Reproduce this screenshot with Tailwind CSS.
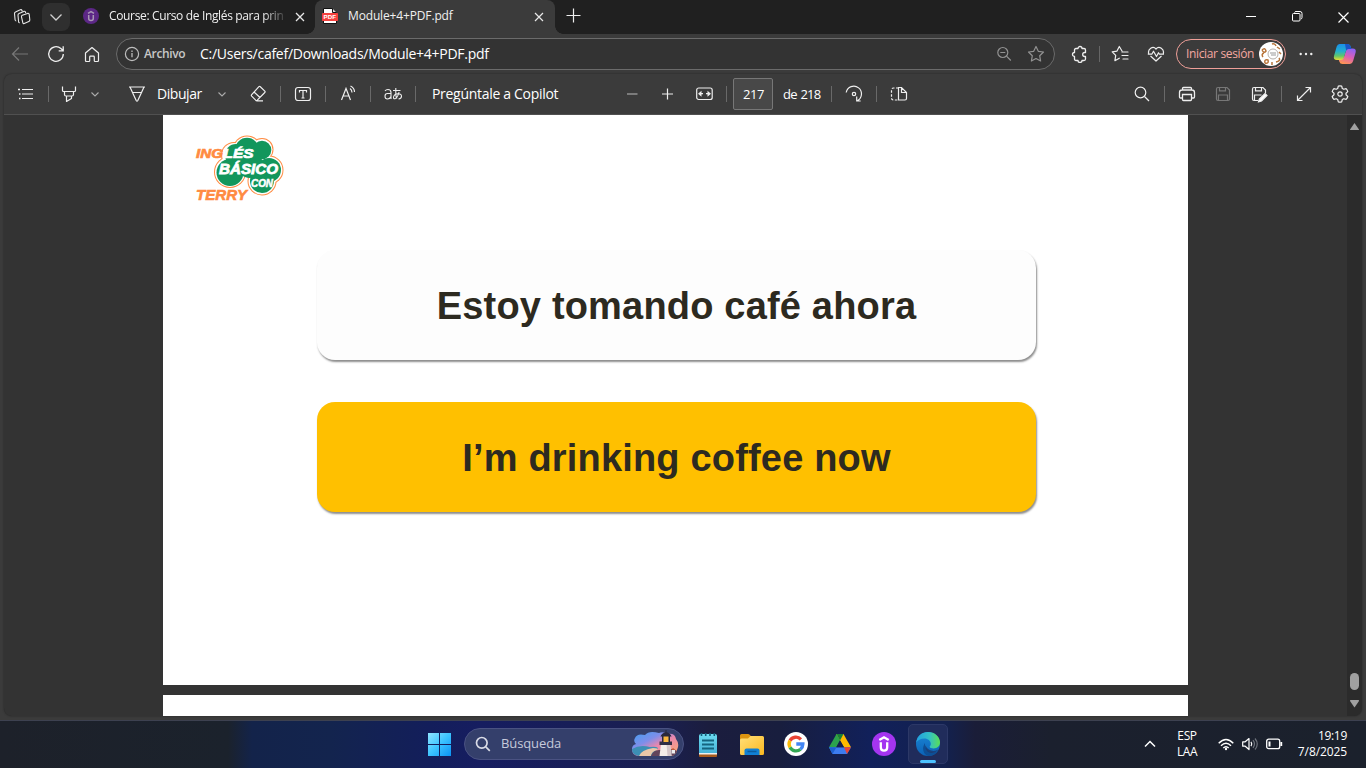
<!DOCTYPE html>
<html lang="es">
<head>
<meta charset="utf-8">
<title>Module+4+PDF.pdf</title>
<script src="https://cdn.jsdelivr.net/npm/@tailwindcss/browser@4"></script>
</head>
<body class="w-[1366px] h-[768px] overflow-hidden bg-[#3b3b3b] text-white font-['Open_Sans','Noto_Sans',sans-serif] flex flex-col [&_svg]:shrink-0 [&_svg]:block [&_span]:shrink-0 [&_span]:whitespace-nowrap">

<!-- Tab strip -->
<header class="h-[34px] shrink-0 bg-[#202020] flex items-stretch">
  <svg class="ml-3 mt-[7px]" width="20" height="20" fill="none" stroke="#e6e6e6" stroke-width="1.1" stroke-linejoin="round"><path d="M10.300 8.300l5.200-1.900q1.400-.4 1.700.9l.6 5.400q.1 1.300-1 1.800l-4.600 2q-1.200.4-1.400-.8L9.500 9.800q-.1-1.100.8-1.500z"/><path d="M7.800 15.800q-1 .1-1.200-1L6 8.200q0-1.200 1-1.600l4.800-2.200q1.300-.4 1.700.8l.2 1M4.300 14q-1 0-1.200-1L2.500 6.500q0-1.200 1-1.600l4.800-2.200q1.300-.4 1.700.8l.2.800"/></svg>
  <div class="ml-[10px] mt-[3px] w-7 h-7 rounded-lg bg-[#2f2f2f] flex items-center justify-center shrink-0"><svg width="14" height="10" fill="none" stroke="#d0d0d0" stroke-width="1.3"><path d="M1.500 2.500l5.500 5.500 5.500-5.500"/></svg></div>
  <div class="w-[245px] flex items-stretch shrink-0">
    <svg class="ml-[13px] mt-2" width="16" height="16"><circle cx="8" cy="8" r="8" fill="#5c2786"/><path d="M5 5.300L8 3.500l3 1.800M5.700 7v3.500q0 2 2.300 2t2.300-2V7" fill="none" stroke="#a897b5" stroke-width="1.500"/></svg>
    <span class="ml-[10px] w-[179px] text-xs leading-[31px] tracking-[-0.35px] text-[#f0f0f0] [mask-image:linear-gradient(90deg,#000_86%,transparent)]">Course: Curso de Inglés para prin</span>
    <svg class="ml-[7px] mt-3" width="10" height="10" stroke="#e8e8e8" stroke-width="1.300"><path d="M1 1l8 8M9 1L1 9"/></svg>
  </div>
  <div class="w-[240px] bg-[#3b3b3b] rounded-t-[8px] flex items-stretch shrink-0 relative before:absolute before:-left-2 before:bottom-0 before:size-2 before:bg-[radial-gradient(circle_at_0_0,#202020_7.500px,#3b3b3b_8px)] after:absolute after:-right-2 after:bottom-0 after:size-2 after:bg-[radial-gradient(circle_at_100%_0,#202020_7.500px,#3b3b3b_8px)]">
    <svg class="ml-[7px] mt-2" width="16" height="16"><path d="M1.500.5h9l4 4v11h-13z" fill="#fff" stroke="#111"/><path d="M10.500.5v4h4" fill="#ddd" stroke="#111"/><rect y="5" width="16" height="8" rx=".8" fill="#f4403d"/><text x="1.600" y="11.300" font-size="6.200" font-weight="700" fill="#fff" textLength="12.500" font-family="Liberation Sans">PDF</text></svg>
    <span class="ml-[10px] w-[120px] text-xs leading-[31px] tracking-[-0.15px] text-[#f0f0f0]">Module+4+PDF.pdf</span>
    <svg class="ml-[66px] mt-3" width="10" height="10" stroke="#e8e8e8" stroke-width="1.200"><path d="M1 1l8 8M9 1L1 9"/></svg>
  </div>
  <svg class="ml-[11px] mt-2" width="15" height="16" stroke="#eee" stroke-width="1.200"><path d="M.5 7.500h14M7.500.5v14"/></svg>
  <svg class="ml-[665px] mt-[11px]" width="10" height="11" stroke="#fff"><path d="M0 5.500h10"/></svg>
  <svg class="ml-[36px] mt-[11px]" width="11" height="11" fill="none" stroke="#fff"><rect x=".5" y="2.500" width="7.500" height="7.500" rx="1"/><path d="M2.500 1.500q.3-1 1.500-1h4q2 0 2 2v4q0 1.200-1 1.500"/></svg>
  <svg class="ml-[35px] mt-3" width="11" height="11" stroke="#fff" stroke-width="1.200"><path d="M.5.500l10 10M10.500.500l-10 10"/></svg>
</header>

<!-- Address row -->
<nav class="h-10 shrink-0 flex items-center">
  <svg class="ml-[11px]" width="18" height="16" fill="none" stroke="#777" stroke-width="1.200"><path d="M17 8H1.500M8 1.500L1.500 8 8 14.500"/></svg>
  <svg class="ml-[18px]" width="18" height="18" fill="none" stroke="#eee" stroke-width="1.300"><path d="M16.300 9A7.300 7.300 0 1 1 13.900 3.600L16 5.500M16.200 1.300v4.500h-4.500"/></svg>
  <svg class="ml-[19px]" width="16" height="17" fill="none" stroke="#eee" stroke-width="1.200" stroke-linejoin="round"><path d="M1.500 7L8 1.500 14.500 7v7.500q0 1-1 1H11q-.7 0-.7-.8V11q0-.8-.8-.8h-3q-.8 0-.8.8v3.700q0 .8-.7.8H2.500q-1 0-1-1z"/></svg>
  <div class="ml-4 w-[939px] h-8 rounded-full border border-[#6b6b6b] bg-[#333] flex items-center shrink-0">
    <svg class="ml-[7px]" width="16" height="16" fill="none" stroke="#bdbdbd" stroke-width="1.200"><circle cx="8" cy="8" r="6.600"/><path d="M8 7v4.200M8 4.600v1.300" stroke-width="1.300"/></svg>
    <span class="ml-1 w-[50px] text-xs font-semibold tracking-[-0.35px] text-[#c8c8c8]">Archivo</span>
    <span class="ml-[6px] w-[320px] text-sm tracking-[-0.270px]">C:/Users/cafef/Downloads/Module+4+PDF.pdf</span>
    <svg class="ml-[476px]" width="16" height="16" fill="none" stroke="#929292" stroke-width="1.200"><circle cx="6.800" cy="6.500" r="5"/><path d="M4.300 6.500h5M10.500 10.200l4.300 4.300"/></svg>
    <svg class="ml-[15px]" width="18" height="18" fill="none" stroke="#929292" stroke-width="1.200" stroke-linejoin="round"><path d="M9 1.500l2.300 4.800 5.200.7-3.800 3.700.9 5.300L9 13.500 4.400 16l.9-5.300L1.500 7l5.200-.7z"/></svg>
  </div>
  <svg class="ml-4" width="18" height="18" fill="none" stroke="#eee" stroke-width="1.300" stroke-linejoin="round"><path d="M3.500 5q0-1.500 1.500-1.500h2a2 2 0 0 1 4 0h2q1.500 0 1.500 1.500v2.500h-.8a2 2 0 0 0 0 4h.8V14q0 1.500-1.500 1.500h-2a2 2 0 0 1-4 0H5Q3.500 15.500 3.500 14v-2.500a2 2 0 0 1 0-4z"/></svg>
  <i class="ml-[10px] w-px h-4 bg-[#666]"></i>
  <svg class="ml-[11px]" width="18" height="18" fill="none" stroke="#eee" stroke-width="1.200" stroke-linejoin="round" stroke-linecap="round"><path d="M11 6L8.300 1.500 6 6.100l-4.800.7 3.500 3.500-.8 5.400 4.400-2.500M17 7h-6M17 10.500h-6M17 14h-5"/></svg>
  <svg class="ml-[18px]" width="18" height="16" fill="none" stroke="#eee" stroke-width="1.200" stroke-linejoin="round"><path d="M1.700 7.500C.5 3.500 5.800-.8 9 3c3.200-3.800 8.500.5 7.300 4.500M3.500 10L9 15l5.500-5M.8 8.200h4L6.500 5.200l3 5.300 2-3.800.9 1.500H17"/></svg>
  <div class="ml-[11px] w-[110px] h-[30px] rounded-full border border-[#ef9f98] flex items-center shrink-0">
    <span class="ml-[9px] w-[70px] text-xs tracking-[-0.35px] text-[#f4a8a1]">Iniciar sesión</span>
    <svg class="ml-[3px]" width="24" height="24"><circle cx="12" cy="12" r="12" fill="#fff"/><g fill="none" stroke="#b8753b" stroke-width="1.500"><circle cx="14" cy="12" r="5" stroke="#b5b0ac" stroke-width="1"/><path d="M3 8q3-3 4 1-2 3-4-1M4 15q-2-3 1-4M6 21q-1-4 3-3 1 4-3 3M13 23v-3M17 20q5-1 3-4M22 12l-2-2M13 2q3-1 4 2M18 5l3 2"/></g><path d="M11 11h6M12 13h5" stroke="#999"/></svg>
  </div>
  <svg class="ml-[13px]" width="14" height="4" fill="#eee"><circle cx="1.700" cy="2" r="1.200"/><circle cx="7" cy="2" r="1.200"/><circle cx="12.300" cy="2" r="1.200"/></svg>
  <svg class="ml-5" width="24" height="22"><defs><linearGradient id="ca" x1="0" y1="0" x2="0" y2="1"><stop stop-color="#1b8fe8"/><stop offset=".45" stop-color="#22b0d0"/><stop offset=".75" stop-color="#62c56a"/><stop offset="1" stop-color="#eadc35"/></linearGradient><linearGradient id="cb" x1=".7" y1="0" x2=".3" y2="1"><stop stop-color="#8f62f5"/><stop offset=".5" stop-color="#dc5fb5"/><stop offset="1" stop-color="#ff9650"/></linearGradient></defs><path d="M17 21H9.500q-2.500 0-3.200-2.600L5.500 16l3-.5q2 0 2.600-2l2-6q.6-2 2.500-2h4q4 0 3 4l-2.500 8.500Q19.300 21 17 21z" fill="url(#cb)"/><path d="M6.500 1H14q3 0 3.700 2.800L18.200 6h-2.700q-2 0-2.600 2l-2.200 7q-.7 2-2.700 2H4q-4 0-3-4L3.700 3.500Q4.500 1 6.500 1z" fill="url(#ca)"/><path d="M12 1h2.500q2.500 0 3.200 2.800L18.500 6h-3q-1.800 0-2.400 1.500z" fill="#1a55c8"/></svg>
</nav>

<!-- PDF viewer -->
<main class="mx-1 h-[642px] shrink-0 rounded-lg overflow-hidden bg-[#333] flex flex-col shadow-[0_0_2px_#222]">
  <div class="h-[41px] shrink-0 bg-[#3b3b3b] border-b border-[#505050] flex items-center text-sm tracking-[-0.3px] [&_i]:w-px [&_i]:h-4 [&_i]:bg-[#696969] [&_i]:shrink-0">
    <svg class="ml-3" width="20" height="20" fill="none" stroke="#eee" stroke-width="1.200"><path d="M6 5.500h11M6 10h11M6 14.500h11"/><path d="M2 5.500h2M3 10h1.500M3 14.500h1.500" stroke-width="1.500"/></svg>
    <i class="ml-3"></i>
    <svg class="ml-[10px]" width="20" height="20" fill="none" stroke="#eee" stroke-width="1.200" stroke-linejoin="round"><path d="M3.500 2.500v4q0 1 1 1h11q1 0 1-1v-4M5.500 7.500v3q0 1.500 1.500 1.500h6q1.500 0 1.500-1.500v-3M7.500 12v5.500l5-3V12"/></svg>
    <svg class="ml-[10px]" width="12" height="10" fill="none" stroke="#aaa" stroke-width="1.100"><path d="M2.500 3.500L6 7l3.500-3.500"/></svg>
    <svg class="ml-[26px]" width="20" height="20" fill="none" stroke="#eee" stroke-width="1.200" stroke-linejoin="round"><path d="M2 3h16M3 3l2.500 5.500h9L17 3M5.500 8.500l3.700 8q.8 1.400 1.600 0l3.700-8"/></svg>
    <span class="ml-[10px] w-[50px] tracking-[-0.45px]">Dibujar</span>
    <svg class="ml-[9px]" width="12" height="10" fill="none" stroke="#aaa" stroke-width="1.100"><path d="M2.500 3.500L6 7l3.500-3.500"/></svg>
    <svg class="ml-5" width="20" height="20" fill="none" stroke="#eee" stroke-width="1.200" stroke-linejoin="round"><path d="M12.300 2.700l4.500 4.400q.7.700 0 1.400l-7.500 7.700q-.8.700-1.600 0l-4-4q-.7-.8 0-1.600l7.200-7.900q.7-.7 1.400 0zM6 8l6 5.500M8.500 16.800H15"/></svg>
    <i class="ml-3"></i>
    <svg class="ml-3" width="20" height="20" fill="none" stroke="#eee" stroke-width="1.200"><rect x="2.500" y="3.500" width="15" height="13" rx="2.500"/><path d="M6.500 8.500V6.500h7v2M10 6.500v7.500M8.500 14h3"/></svg>
    <i class="ml-3"></i>
    <svg class="ml-[13px]" width="20" height="20" fill="none" stroke="#eee" stroke-width="1.200"><path d="M2.500 16L7 4.500 11.500 16M4 12h6M11 4.500q2 1.500 2 4M11.500 2q4 2 4 6"/></svg>
    <i class="ml-[11px]"></i>
    <svg class="ml-3" width="20" height="20" fill="none" stroke="#eee" stroke-width="1.100"><path d="M2 7q1-1.500 3-1.500 3 0 3 3V15M8 9.500H4.500q-2.500 0-2.500 2.700T4.500 15Q7 15 8 12.500M10 6.500h7.500M12.800 4v6q0 3 1.200 4.500M16 8q-1 5-3.500 6.500-2.300.7-2-1.500.7-3 4.500-3.300 3.500 0 3.500 2.500T15.500 15"/></svg>
    <i class="ml-3"></i>
    <span class="ml-4 w-[130px]">Pregúntale a Copilot</span>
    <svg class="ml-[60px]" width="20" height="20" stroke="#bbb" stroke-width="1.200"><path d="M5 10h10.500"/></svg>
    <svg class="ml-[15px]" width="20" height="20" stroke="#eee" stroke-width="1.200"><path d="M5 10h11M10.500 4.500v11"/></svg>
    <svg class="ml-[18px]" width="20" height="20" fill="none" stroke="#eee" stroke-width="1.200"><rect x="1.700" y="4" width="15.500" height="11.500" rx="2"/><path d="M3 9.700l3.500-3v6zM16 9.700l-3.500-3v6z" fill="#eee" stroke="none"/><path d="M5 9.700h3M11 9.700h3"/></svg>
    <i class="ml-[11px]"></i>
    <div class="ml-[6px] w-10 h-8 shrink-0 border border-[#777] rounded-[2px] bg-[#484848] flex items-center pl-[9px] text-[13px] tracking-[-0.4px]">217</div>
    <span class="ml-[10px] w-[38px] text-[13px] tracking-[-0.75px] [word-spacing:1px]">de 218</span>
    <i class="ml-[10px]"></i>
    <svg class="ml-3" width="20" height="20" fill="none" stroke="#eee" stroke-width="1.200"><path d="M2.500 8.500A7.700 7.700 0 1 1 13 17M13 12.500V17h4" transform="translate(-.3 0)"/><circle cx="10" cy="10" r="1.700"/></svg>
    <i class="ml-3"></i>
    <svg class="ml-3" width="20" height="20" fill="none" stroke="#eee" stroke-width="1.200"><path d="M9.500 4H4.500q-2 0-2 2v8q0 2 2 2H9" stroke-dasharray="2.500 1.500"/><path d="M9.500 3.500v12.500H16q1.500 0 1.500-1.500V8.500l-5-5zM12.500 3.500v5h5"/></svg>
    <svg class="ml-[223px]" width="20" height="20" fill="none" stroke="#eee" stroke-width="1.200"><circle cx="8.500" cy="8.500" r="5.300"/><path d="M12.500 12.500l4.500 4.500"/></svg>
    <i class="ml-3"></i>
    <svg class="ml-3" width="20" height="20" fill="none" stroke="#eee" stroke-width="1.300"><path d="M5.500 6V4.500q0-1 1-1h7q1 0 1 1V6M5 14H3.500q-1 0-1-1V8.500Q2.500 6 5 6h10q2.500 0 2.500 2.500V13q0 1-1 1H15M5.500 10.500h9v5q0 1-1 1h-7q-1 0-1-1z"/></svg>
    <svg class="ml-4" width="20" height="20" fill="none" stroke="#777" stroke-width="1.200"><path d="M3.500 5q0-1.500 1.500-1.500h9L16.500 6v9q0 1.500-1.500 1.500H5q-1.500 0-1.500-1.500zM6.500 3.500v3.300h6V3.500M5.500 16.500V11h9v5.500"/></svg>
    <svg class="ml-4" width="20" height="20" fill="none" stroke="#eee" stroke-width="1.200"><path d="M9 16.500H5q-1.500 0-1.500-1.500V5q0-1.500 1.500-1.500h9L16.500 6v3M6.500 3.500v3.300h6V3.500M5.500 16.500V11h7"/><path d="M16 9.500l2 2-5.500 5.500-3 .9.800-2.900z" fill="#fff"/></svg>
    <i class="ml-3"></i>
    <svg class="ml-3" width="20" height="20" fill="none" stroke="#eee" stroke-width="1.200"><path d="M3.500 16.500l13-13M11.500 3.500h5v5M3.500 11.500v5h5"/></svg>
    <svg class="ml-4 -mt-px" width="20" height="20" fill="none" stroke="#eee" stroke-width="1.200" stroke-linejoin="round"><path d="M8.300 2.200q1.700-.5 3.400 0l.6 2.300 1.500.8 2.300-.7q1.200 1.200 1.700 3L16 9.200v1.600l1.800 1.700q-.5 1.700-1.700 2.900l-2.300-.7-1.500.8-.6 2.300q-1.700.5-3.400 0l-.6-2.300-1.500-.8-2.300.7q-1.200-1.200-1.700-2.900L4 10.800V9.200L2.200 7.600q.5-1.800 1.700-3l2.300.7 1.500-.8z"/><circle cx="10" cy="10" r="2.200"/></svg>
  </div>
  <div class="flex-1 flex min-h-0">
    <div class="flex-1 pl-[159px] flex flex-col gap-[10px]">
      <section class="w-[1025px] h-[570px] bg-white shrink-0 pt-[17px]">
        <svg class="ml-[30px]" width="96" height="78" font-family="Liberation Sans" font-weight="700" font-style="italic">
          <g fill="#ff8b42"><circle cx="41" cy="23" r="13"/><circle cx="54" cy="17.500" r="14"/><circle cx="69" cy="17.500" r="11.500"/><circle cx="76" cy="38" r="14.500"/><circle cx="69" cy="49" r="14.500"/><circle cx="37" cy="40" r="16"/></g>
          <g fill="#fff"><circle cx="41" cy="23" r="12"/><circle cx="54" cy="17.500" r="13"/><circle cx="69" cy="17.500" r="10.500"/><circle cx="76" cy="38" r="13.500"/><circle cx="69" cy="49" r="13.500"/><circle cx="37" cy="40" r="15"/></g>
          <g fill="#12965c"><circle cx="43" cy="23" r="11"/><circle cx="54" cy="17.500" r="11.800"/><circle cx="69" cy="18" r="9.300"/><circle cx="76" cy="38" r="12"/><circle cx="69" cy="49" r="12"/><circle cx="37" cy="40.500" r="13.500"/><circle cx="57" cy="33" r="13"/></g>
          <text x="3" y="26" font-size="13.500" fill="#ff8b42" stroke="#ff8b42" stroke-width=".7" textLength="27" lengthAdjust="spacingAndGlyphs">ING</text>
          <text x="30.500" y="26" font-size="13.500" fill="#fff" stroke="#fff" stroke-width=".7" textLength="30" lengthAdjust="spacingAndGlyphs">LÉS</text>
          <text x="26" y="41.500" font-size="15" fill="#fff" stroke="#fff" stroke-width=".8" textLength="59" lengthAdjust="spacingAndGlyphs">BÁSICO</text>
          <text x="58" y="55" font-size="10" fill="#fff" stroke="#fff" stroke-width=".5" textLength="22" lengthAdjust="spacingAndGlyphs">CON</text>
          <text x="3" y="68" font-size="14" fill="none" stroke="#fff" stroke-width="3.500" textLength="51" lengthAdjust="spacingAndGlyphs" aria-hidden="true"></text>
          <text x="3" y="68" font-size="14" fill="#ff8b42" stroke="#ff8b42" stroke-width=".6" textLength="51" lengthAdjust="spacingAndGlyphs">TERRY</text>
        </svg>
        <div class="ml-[154px] mt-10 w-[719px] h-[110px] rounded-[18px] bg-[#fdfdfd] shadow-[1px_2px_2px_#00000073] flex items-center justify-center text-[38px] font-bold text-[#2d2a20] tracking-[0.18px] font-['Liberation_Sans',Arial,sans-serif]"><span class="mt-[2px]">Estoy tomando café ahora</span></div>
        <div class="ml-[154px] mt-[42px] w-[719px] h-[110px] rounded-[18px] bg-[#ffc000] shadow-[1px_2px_2px_#00000073] flex items-center justify-center text-[38px] font-bold text-[#2d2a20] tracking-[0.18px] font-['Liberation_Sans',Arial,sans-serif]"><span class="mt-[2px]">I’m drinking coffee now</span></div>
      </section>
      <section class="w-[1025px] h-[21px] bg-white shrink-0"></section>
    </div>
    <aside class="w-[15px] bg-[#2b2b2b] flex flex-col items-center">
      <svg class="mt-[7px]" width="9" height="9"><path d="M4.500 1L9 7.500Q9 8 8.500 8H.5Q0 8 0 7.500z" fill="#a0a0a0"/></svg>
      <div class="mt-[542px] w-[9px] h-[17px] rounded-full bg-[#a0a0a0]"></div>
      <svg class="mt-[9px]" width="9" height="9"><path d="M4.500 8.500L0 2Q0 1 .5 1h8q.5 0 .5 1z" fill="#a0a0a0"/></svg>
    </aside>
  </div>
</main>
<div class="h-1 shrink-0"></div>

<!-- Taskbar -->
<footer class="h-12 shrink-0 border-t border-[#3d4150] bg-[linear-gradient(90deg,#1d212a_0,#1b222c_228px,#13234a_252px,#13244e_330px,#131e5b_430px,#161d60_480px,#1a1f50_660px,#1b1d3e_710px,#181e3e_780px,#11205a_870px,#13214f_945px,#1a1d38_975px,#1b202e_1050px,#1b212c_1366px)] flex items-center pb-px text-xs">
  <svg class="ml-[428px]" width="23" height="23"><defs><linearGradient id="w" x1="0" y1="0" x2="23" y2="23" gradientUnits="userSpaceOnUse"><stop stop-color="#8fe4ff"/><stop offset=".5" stop-color="#3cc3ff"/><stop offset="1" stop-color="#0a93f5"/></linearGradient></defs><path fill="url(#w)" d="M0 0h11v11H0zM12 0h11v11H12zM0 12h11v11H0zM12 12h11v11H12z"/></svg>
  <div class="ml-[13px] w-[220px] h-8 shrink-0 rounded-full border border-[#4a5282] bg-[#343f6b] flex items-center">
    <svg class="ml-[10px]" width="16" height="16" fill="none" stroke="#d9dbe6" stroke-width="1.700"><circle cx="6.800" cy="6.800" r="5.300"/><path d="M10.800 10.800l4 4"/></svg>
    <span class="ml-[10px] w-[70px] text-[13px] tracking-[-0.1px] text-[#c6cadb]">Búsqueda</span>
    <svg class="ml-[60px]" width="48" height="28"><defs><linearGradient id="sky" x1="0" y1="0" x2="1" y2="1"><stop stop-color="#3ea0f0"/><stop offset=".35" stop-color="#7e8eea"/><stop offset=".55" stop-color="#e887ae"/><stop offset="1" stop-color="#ffad6b"/></linearGradient></defs><path d="M4 8Q6 3 14 5q4-5 14-2 4-2 9 1 7-1 8 5 4 5 1 11-1 6-7 6H8q-7 0-7-7 0-4 4-5-3-3-1-6z" fill="url(#sky)"/><path d="M1 19q8-5 18-2 6-1 8 1l-6 8H8q-7-1-7-7z" fill="#3c8fb5"/><path d="M8 26q2-6 14-8 6 0 4 2-6 2-6 6z" fill="#e9c7a8"/><path d="M20 26q2-6 8-6l14-1 4 2q-1 5-7 5z" fill="#62445a"/><path d="M30 14h9l1.500 12H28.500z" fill="#f4eee9"/><path d="M35.500 14h3.500l1.500 12h-4z" fill="#d5c8ca"/><path d="M28.500 11.500h12.500v3.500h-12.500z" fill="#302f45"/><path d="M31.500 6h7v6h-7z" fill="#f9b63d"/><path d="M29.500 6.500q1-3.500 5.500-4.500 4.500 1 5.500 4.500zM34.500 0h1v3h-1zM31 6h1.500v6h-1.500zM37.500 6h1.500v6h-1.500z" fill="#29283c"/><path d="M40.500 20h3.500v3.500h-3.500z" fill="#eee"/><path d="M40 20l2-2 2.500 2z" fill="#c25b3c"/></svg>
  </div>
  <svg class="ml-[14px]" width="20" height="25"><defs><linearGradient id="np" x2="0" y2="1"><stop stop-color="#6bdcf0"/><stop offset="1" stop-color="#47b2d8"/></linearGradient></defs><rect x="1" y="21" width="18" height="4" rx="1" fill="#a85a1c"/><rect x="1" y="20" width="18" height="2.500" fill="#eee"/><path d="M1 4q0-2 2-2h14q2 0 2 2v17H1z" fill="url(#np)"/><path d="M4 8.500h12M4 12.500h12M4 16.500h12" stroke="#14647f" stroke-width="1.800"/><path d="M3.500 1v3M7.700 1v3M12 1v3M16.300 1v3" stroke="#125d78" stroke-width="1.600"/></svg>
  <svg class="ml-[22px]" width="24" height="23"><defs><linearGradient id="fo" x2="1" y2="1"><stop stop-color="#ffe07a"/><stop offset="1" stop-color="#fbb81f"/></linearGradient></defs><path d="M0 2.500Q0 1 1.500 1H8q1 0 2 1l1.500 2H10L8 8H0z" fill="#dc9410"/><path d="M0 7Q0 5.500 1.500 5.500H8L10.500 3h12Q24 3 24 4.500v16q0 1.500-1.500 1.500h-21Q0 22 0 20.500z" fill="url(#fo)"/><path d="M4.500 22v-4.500q0-2 2-2h11q2 0 2 2V22z" fill="#1180d4"/><path d="M7.500 18.500h9" stroke="#0c5c9c" stroke-width="1.500"/></svg>
  <svg class="ml-5" width="24" height="24" viewBox="0 0 24 24"><circle cx="12" cy="12" r="12" fill="#fff"/><g fill="none" stroke-width="3.300"><path d="M16.900 7.300A6.900 6.900 0 0 0 6 8.600" stroke="#ea4335"/><path d="M6 8.600a6.900 6.900 0 0 0 0 6.800" stroke="#fbbc05"/><path d="M6 15.400a6.900 6.900 0 0 0 10.500 1.800" stroke="#34a853"/><path d="M16.500 17.200A6.900 6.900 0 0 0 18.900 12H12.300" stroke="#4285f4"/></g></svg>
  <svg class="ml-[21px]" width="22" height="20"><path d="M7.500 0h7L4 19 0 13.200z" fill="#2ba24c"/><path d="M7.500 0h7L22 13.200h-7z" fill="#ffba00"/><path d="M4 13.200h18L18 20H3.500L0 13.200z" fill="#3d7cf0"/><path d="M0 13.200L3.500 20l4-6.800z" fill="#1d60d0"/><path d="M15 13.200h7L18 20z" fill="#ea4335"/><path d="M7.500 0L11 6.500 14.500 0z" fill="#188038"/><path d="M11 6.600l3.900 6.600H7.300z" fill="#15204e"/></svg>
  <svg class="ml-[21px]" width="24" height="24"><circle cx="12" cy="12" r="12" fill="#a435f0"/><path d="M7.300 8L12 5.300 16.700 8M8.800 10.300v5q0 3.400 3.200 3.400t3.200-3.400v-5" fill="none" stroke="#fff" stroke-width="2.300"/></svg>
  <div class="ml-3 w-10 h-10 shrink-0 rounded-[5px] border border-[#2c3867] bg-[#202c5b] flex flex-col items-center">
    <svg class="mt-[7px]" width="24" height="24"><defs><linearGradient id="ea" x1="0" x2="1"><stop stop-color="#229fe0"/><stop offset=".55" stop-color="#32bfc6"/><stop offset="1" stop-color="#5ade55"/></linearGradient><linearGradient id="eb" x2="0" y2="1"><stop stop-color="#1b86d6"/><stop offset="1" stop-color="#0b62b6"/></linearGradient></defs><circle cx="12" cy="12" r="12" fill="url(#eb)"/><path d="M.2 10.500C1 4 6 0 12 0c7 0 12 5 12 10.300 0 4-3 6.200-6.300 6.200-2.400 0-4-.8-4-1.700 0-.7 1.100-1.200 1.100-3C14.800 9 12 6.500 8.500 6.500 4.500 6.500 1.500 8.300.2 10.500z" fill="url(#ea)"/><path d="M9 12.500c0 5.500 4.200 8.700 8.700 8.200 2.300-.3 4-1.200 4.800-2.200A12 12 0 0 1 12 24C7 22.500 5.500 16 9 11z" fill="#0d4f96"/><path d="M22.500 17.500q-3 1.700-6 1.300-4.500-.4-7.300-5.600 0 5.800 4.800 7.500 5.500 1 8.500-3.200z" fill="#202c5b" opacity=".65"/></svg>
    <div class="mt-[4px] w-4 h-[3px] rounded-full bg-[#4cc2ff]"></div>
  </div>
  <svg class="ml-[196px]" width="12" height="8" fill="none" stroke="#fff" stroke-width="1.500"><path d="M1 6.500l5-5 5 5"/></svg>
  <div class="ml-[19px] w-[24px] shrink-0 text-center leading-4 tracking-[-0.4px] flex flex-col items-center"><span>ESP</span><span>LAA</span></div>
  <svg class="ml-[19px]" width="16" height="13" fill="none" stroke="#fff" stroke-width="1.400"><path d="M.7 5.200q7.300-7.500 14.600 0M3 7.700q5-5 10 0M5.300 10q2.700-2.700 5.400 0"/><circle cx="8" cy="11" r="1.200" fill="#fff" stroke="none"/></svg>
  <svg class="ml-2" width="16" height="14" fill="none" stroke="#fff" stroke-width="1.200" stroke-linejoin="round"><path d="M.7 4.800v4.400h2.500L7 12.500v-11L3.200 4.800zM9 4.800q1.500 2.200 0 4.400"/><path d="M11 3.200q3 3.800 0 7.600M13 1.500q4.500 5.500 0 11" stroke="#6c717a"/></svg>
  <svg class="ml-2" width="17" height="12" fill="none" stroke="#fff" stroke-width="1.300"><rect x=".7" y="1.200" width="13" height="9.500" rx="2"/><path d="M3.500 3.500v5" stroke-width="2"/><path d="M15.300 4v4" stroke-width="1.800"/></svg>
  <div class="ml-[14px] w-[50px] shrink-0 leading-4 tracking-[-0.1px] flex flex-col items-end"><span class="tracking-[-0.3px]">19:19</span><span>7/8/2025</span></div>
</footer>
</body>
</html>
